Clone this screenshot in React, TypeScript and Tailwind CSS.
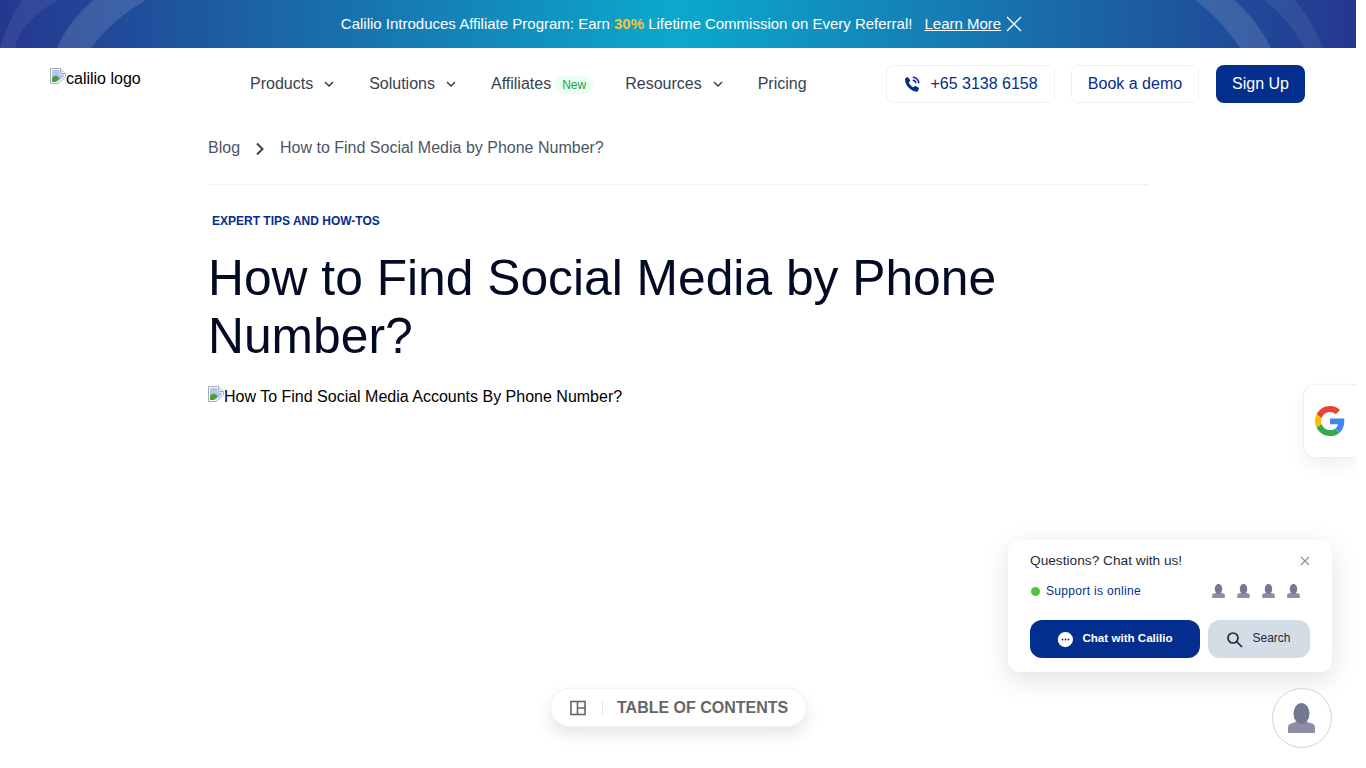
function BrokenImage() {
  return (
    <svg width="16" height="16" viewBox="0 0 16 16" className="shrink-0">
      <path d="M0.5 0.5H10.5L15.5 5.5V9L8 15.500H0.5Z" fill="#fff" stroke="#a9adb3" />
      <path d="M10.500 0.500V5.500H15.500" fill="#e8eaed" stroke="#a9adb3" />
      <path d="M2 2H9.500V6.500H14V8.500L7.500 14H2Z" fill="#aec7f0" />
      <path d="M2 14V10C4 7.500 6.500 7 9 9.500L10 10.200 5.500 14Z" fill="#4f9a3a" />
    </svg>
  );
}

function Chevron() {
  return (
    <svg width="10" height="6" viewBox="0 0 10 6" fill="none" stroke="#374151" strokeWidth="1.5" className="shrink-0">
      <path d="M1 1l4 4 4-4" />
    </svg>
  );
}

function Person({ w, h }: { w: number; h: number }) {
  return (
    <svg width={w} height={h} viewBox="0 0 27 30" className="shrink-0">
      <path fill="#8b8fa3" d="M0 30V24.500C0 21.500 2 20.500 5 20L9.500 18H17.500L22 20C25 20.500 27 21.500 27 24.500V30Z" />
      <ellipse cx="13.500" cy="10.500" rx="8" ry="10.500" fill="#737990" />
    </svg>
  );
}

function ArcsLeft() {
  return (
    <svg width="170" height="48" viewBox="0 0 170 48" className="shrink-0">
      <path d="M0 48C5 30 13 14 22 0H57C35 14 18 30 15 48Z" fill="#ffffff" fillOpacity="0.07" />
      <path d="M57 48C65 30 78 12 94 0H146C125 12 106 28 91 48Z" fill="#ffffff" fillOpacity="0.13" />
    </svg>
  );
}

function ArcsRight() {
  return (
    <svg width="170" height="48" viewBox="1186 0 170 48" className="shrink-0">
      <path d="M1195 0H1234C1250 14 1262 30 1271 48H1240C1228 30 1214 14 1195 0Z" fill="#ffffff" fillOpacity="0.13" />
      <path d="M1264 0H1295C1307 14 1316 30 1323 48H1304C1295 30 1282 14 1264 0Z" fill="#ffffff" fillOpacity="0.07" />
    </svg>
  );
}

export default function App() {
  return (
    <div className="h-[768px] w-[1366px] overflow-hidden bg-white font-['Liberation_Sans',Arial,sans-serif]">
      <div className="relative h-[768px] w-[1356px] overflow-hidden">
        <div className="relative flex h-12 items-center justify-between overflow-hidden bg-[linear-gradient(90deg,#25378f_0%,#0ba9cc_50%,#25378f_100%)]">
          <ArcsLeft />
          <div className="flex items-center pl-[7px] text-[15px] text-white">
            <span>
              Calilio Introduces Affiliate Program: Earn <b className="text-[#f5c43c]">30%</b> Lifetime Commission on Every Referral!
            </span>
            <a className="ml-3 underline">Learn More</a>
            <svg width="16" height="16" viewBox="0 0 16 16" stroke="#fff" strokeWidth="1.3" className="ml-[5px]">
              <path d="M1 1l14 14M15 1L1 15" />
            </svg>
          </div>
          <ArcsRight />
        </div>

        <header className="flex h-[72px] items-start pl-[50px] pr-[51px]">
          <div className="mt-[20px] flex w-[200px] items-start text-base leading-[22px] text-black">
            <BrokenImage />
            <span>calilio logo</span>
          </div>
          <nav className="mt-[26px] flex items-center text-base leading-5 text-[#374151]">
            <span>Products</span>
            <span className="ml-[11px]"><Chevron /></span>
            <span className="ml-[35px]">Solutions</span>
            <span className="ml-[11px]"><Chevron /></span>
            <span className="ml-[35px]">Affiliates</span>
            <span className="ml-[4px] mt-[2px] flex h-[18px] items-center rounded-full bg-[#ecfdf3] px-[7px] text-xs text-[#16a34a]">New</span>
            <span className="ml-[32px]">Resources</span>
            <span className="ml-[11px]"><Chevron /></span>
            <span className="ml-[35px]">Pricing</span>
          </nav>
          <div className="ml-auto mt-[17px] flex items-center text-base text-[#032e8d]">
            <a className="flex h-[38px] w-[169px] items-center justify-center gap-[9px] rounded-lg border border-[#eef0f3] bg-white">
              <svg width="18" height="18" viewBox="0 0 24 24" fill="#032e8d">
                <path d="M6.600 2.500 9.800 7.600 7.700 10c1 2.600 3.600 5.200 6.300 6.300l2.400-2.100 5.100 3.200-1.600 3.900c-.4.700-1.200 1.100-2 1C10 21.200 2.800 14 2.700 6.100c-.1-.8.3-1.600 1-2Z" />
                <path d="M13 3a8 8 0 0 1 8 8M13 7a4 4 0 0 1 4 4" fill="none" stroke="#032e8d" strokeWidth="2" />
              </svg>
              +65 3138 6158
            </a>
            <a className="ml-4 flex h-[38px] w-[128px] items-center justify-center rounded-lg border border-[#eef0f3] bg-white">Book a demo</a>
            <a className="ml-[17px] flex h-[38px] w-[89px] items-center justify-center rounded-lg bg-[#032e8d] text-white">Sign Up</a>
          </div>
        </header>

        <main className="ml-[208px] w-[940px]">
          <div className="flex h-[65px] items-start border-b border-[#eef0f3] pt-[18px] text-base leading-5 text-[#4b5563]">
            <span>Blog</span>
            <svg width="10" height="14" viewBox="0 0 10 14" fill="none" stroke="#374151" strokeWidth="2" className="ml-[15px] mr-[15px] mt-[4px]">
              <path d="M2 1.500l5.500 5.500-5.500 5.500" />
            </svg>
            <span>How to Find Social Media by Phone Number?</span>
          </div>
          <p className="ml-1 mt-[28px] text-xs font-bold leading-4 text-[#032e8d]">EXPERT TIPS AND HOW-TOS</p>
          <h1 className="mt-[20px] text-[49.75px] font-normal leading-[58px] text-[#020b23]">
            How to Find Social Media by Phone<br />Number?
          </h1>
          <div className="mt-[21px] flex items-start text-base leading-[22px] text-black">
            <BrokenImage />
            <span>How To Find Social Media Accounts By Phone Number?</span>
          </div>
        </main>

        <div className="absolute right-0 top-[384px] flex h-[74px] w-[53px] items-center rounded-l-xl border border-r-0 border-[#eef0f3] bg-white pl-[11px] shadow-[0_8px_16px_rgba(0,0,0,0.06)]">
          <svg width="30" height="30" viewBox="0 0 48 48">
            <path fill="#ea4335" d="M24 9.500c3.500 0 6.700 1.200 9.200 3.600l6.800-6.800C35.900 2.400 30.500 0 24 0 14.600 0 6.500 5.400 2.600 13.200l7.900 6.200C12.400 13.600 17.700 9.500 24 9.500z" />
            <path fill="#4285f4" d="M46.900 24.500c0-1.600-.2-3.100-.4-4.500H24v9h12.900c-.6 3-2.200 5.500-4.800 7.200l7.700 6c4.500-4.200 7.100-10.300 7.100-17.700z" />
            <path fill="#fbbc05" d="M10.500 28.600c-.5-1.500-.8-3-.8-4.600s.3-3.100.8-4.600l-7.900-6.200C1 16.500 0 20.100 0 24s1 7.500 2.600 10.800l7.900-6.200z" />
            <path fill="#34a853" d="M24 48c6.500 0 11.900-2.100 15.900-5.800l-7.700-6c-2.200 1.500-4.900 2.300-8.100 2.300-6.300 0-11.700-4.200-13.600-9.900l-7.900 6.200C6.500 42.600 14.600 48 24 48z" />
          </svg>
        </div>

        <div className="absolute left-[1008px] top-[540px] h-[132px] w-[324px] rounded-xl bg-white px-[22px] pt-[12px] shadow-[0_8px_28px_rgba(0,0,0,0.12)]">
          <div className="flex items-center justify-between text-[13.7px] leading-[18px] text-[#1f2937]">
            <span>Questions? Chat with us!</span>
            <svg width="10" height="10" viewBox="0 0 10 10" stroke="#8b9099" strokeWidth="1.100">
              <path d="M1 1l8 8M9 1L1 9" />
            </svg>
          </div>
          <div className="mt-[13px] flex items-center text-xs leading-4 tracking-[0.33px] text-[#032e8d]">
            <span className="ml-[1px] mr-[6px] h-[9px] w-[9px] rounded-full bg-[#4fc63f]" />
            <span>Support is online</span>
            <div className="ml-auto mr-[10px] flex gap-[12px]">
              <Person w={13} h={14} /><Person w={13} h={14} /><Person w={13} h={14} /><Person w={13} h={14} />
            </div>
          </div>
          <div className="mt-[21px] flex gap-2">
            <a className="flex h-[38px] w-[170px] items-center justify-center gap-[8px] rounded-xl bg-[#032e8d] text-[11.6px] font-bold text-white">
              <svg width="17" height="17" viewBox="0 0 17 17">
                <path fill="#fff" d="M8.500 1a7.500 7.500 0 0 1 0 15l-.5 1v-1a7.500 7.500 0 0 1 .5-15z" />
                <circle cx="5.500" cy="8.500" r=".9" fill="#032e8d" />
                <circle cx="8.500" cy="8.500" r=".9" fill="#032e8d" />
                <circle cx="11.500" cy="8.500" r=".9" fill="#032e8d" />
              </svg>
              <span className="mb-[2px]">Chat with Calilio</span>
            </a>
            <a className="flex h-[38px] w-[102px] items-center justify-center gap-[9px] rounded-xl bg-[#d3dde6] pr-[1px] text-xs text-[#1f2937]">
              <svg width="17" height="17" viewBox="0 0 17 17" fill="none" stroke="#1f2937" strokeWidth="1.700">
                <circle cx="7" cy="7" r="5" />
                <path d="M10.500 10.500 16 16" />
              </svg>
              <span className="mb-[2px]">Search</span>
            </a>
          </div>
        </div>

        <div className="absolute left-[1272px] top-[688px] flex h-[60px] w-[60px] items-center justify-center rounded-full border border-[#d4d4d8] bg-white pr-[2px]">
          <Person w={27} h={30} />
        </div>

        <div className="absolute left-[550px] top-[688px] flex h-[39px] w-[257px] items-center rounded-full border border-[#f0f0f0] bg-white pl-[19px] shadow-[0_8px_16px_rgba(0,0,0,0.1)]">
          <svg width="16" height="16" viewBox="0 0 16 16" fill="none" stroke="#666" strokeWidth="1.600">
            <rect x="1" y="1.500" width="14" height="13" />
            <path d="M7.500 1.500V14.500M7.500 8H15" />
          </svg>
          <span className="ml-[16px] h-[14px] w-px bg-[#e5e7eb]" />
          <span className="ml-[14px] text-base font-bold text-[#666]">TABLE OF CONTENTS</span>
        </div>
      </div>
    </div>
  );
}
